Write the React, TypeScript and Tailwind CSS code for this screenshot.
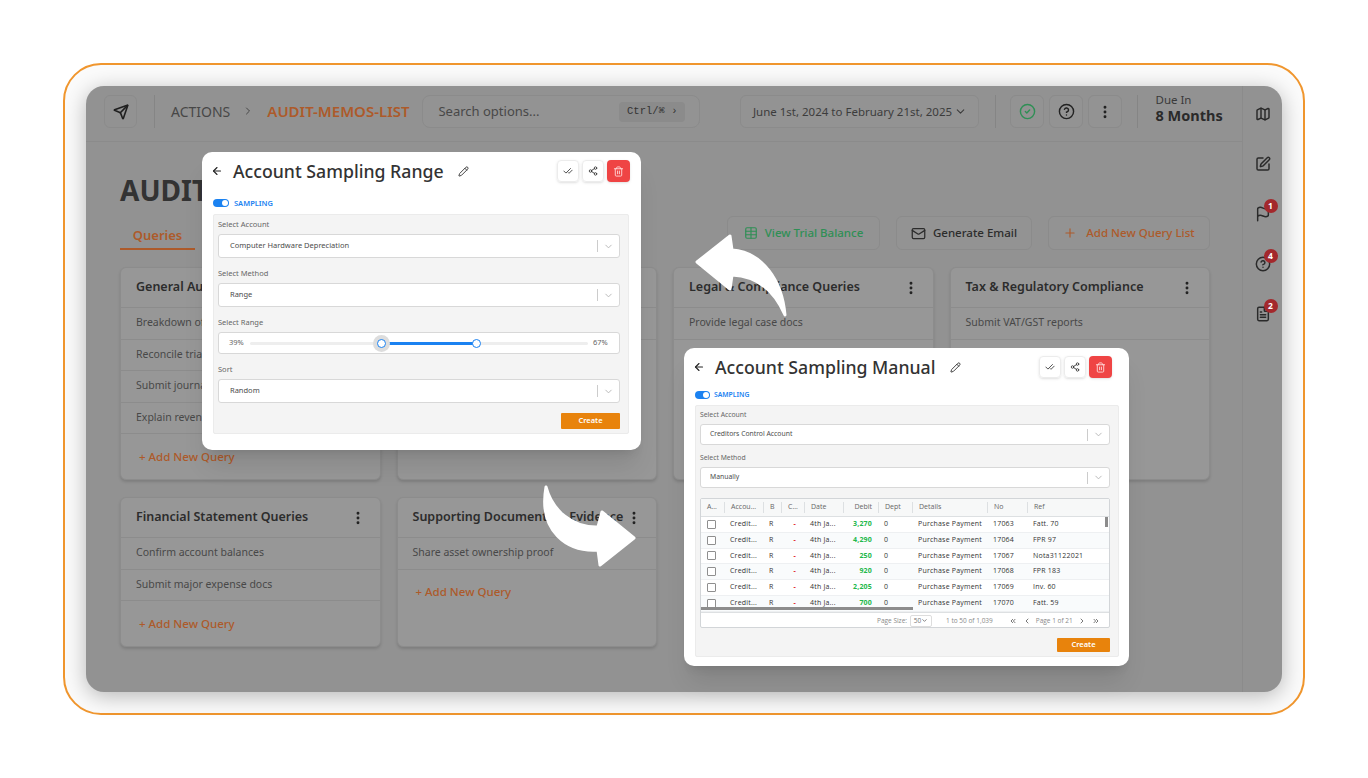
import {
  ArrowLeft,
  CheckCheck,
  ChevronDown,
  ChevronLeft,
  ChevronRight,
  ChevronsLeft,
  ChevronsRight,
  CircleCheck,
  CircleHelp,
  EllipsisVertical,
  FileText,
  Flag,
  Mail,
  Map as MapIcon,
  Pencil,
  Plus,
  Send,
  Share2,
  SquarePen,
  Table,
  Trash2,
} from 'lucide-react'

const font = { fontFamily: '"Noto Sans", "Open Sans", sans-serif' }

const queryCards = [
  {
    title: 'General Audit Queries',
    rows: ['Breakdown of expenses', 'Reconcile trial balance', 'Submit journal entries', 'Explain revenue changes'],
  },
  { title: '', rows: [''] },
  { title: 'Legal & Compliance Queries', rows: ['Provide legal case docs'] },
  { title: 'Tax & Regulatory Compliance', rows: ['Submit VAT/GST reports'] },
  { title: 'Financial Statement Queries', rows: ['Confirm account balances', 'Submit major expense docs'] },
  { title: 'Supporting Documents & Evidence', rows: ['Share asset ownership proof'] },
]

const ledgerRows = [
  { debit: '3,270', no: '17063', ref: 'Fatt. 70' },
  { debit: '4,290', no: '17064', ref: 'FPR 97' },
  { debit: '250', no: '17067', ref: 'Nota31122021' },
  { debit: '920', no: '17068', ref: 'FPR 183' },
  { debit: '2,205', no: '17069', ref: 'Inv. 60' },
  { debit: '700', no: '17070', ref: 'Fatt. 59' },
]

const gridCols = 'grid grid-cols-[23px_39px_18px_23px_39px_35px_34px_75px_40px_1fr]'

function HeaderButton({ children }: { children: React.ReactNode }) {
  return (
    <div className="w-[34px] h-[33px] flex items-center justify-center rounded-md border border-[#8b8b8b] bg-[#939393]">
      {children}
    </div>
  )
}

function SideIcon({ icon, badge }: { icon: React.ReactNode; badge?: string }) {
  return (
    <div className="relative w-[16px] h-[16px] text-[#2a2a2a]">
      {icon}
      {badge && (
        <span className="absolute left-[9px] top-[-7px] w-[14px] h-[14px] rounded-full bg-[#a3282c] text-white text-[8.5px] font-bold flex items-center justify-center">
          {badge}
        </span>
      )}
    </div>
  )
}

function QueryCard({ title, rows }: { title: string; rows: string[] }) {
  return (
    <div className="rounded-md border border-[#8c8c8c] bg-[#979797] shadow-[0_2px_3px_rgba(0,0,0,0.14)]">
      <div className="h-[40px] pl-[15px] pr-[14px] flex items-center justify-between border-b border-[#8c8c8c]">
        <span className="text-[12.5px] font-semibold text-[#2c2c2c] whitespace-nowrap">{title}</span>
        <EllipsisVertical size={16} strokeWidth={2.4} className="text-[#222222] shrink-0" />
      </div>
      {rows.map((row, i) => (
        <div key={i} className="h-[31.5px] pl-[15px] flex items-center border-b border-[#8c8c8c] text-[10.5px] text-[#484848]">
          {row}
        </div>
      ))}
      <div className="h-[45px] pl-[18px] flex items-center text-[11.5px] font-medium text-[#ad5a2a]">+ Add New Query</div>
    </div>
  )
}

function SelectBox({ value, className, small }: { value: string; className: string; small?: boolean }) {
  return (
    <div className={`${className} bg-white border border-[#d8d8d8] rounded-[3px] flex items-center ${small ? 'pl-[9px] text-[6.8px]' : 'pl-[11px] text-[7.5px]'} text-[#4c4c4c]`}>
      <span className="flex-1">{value}</span>
      <span className="w-px h-[12px] bg-[#cccccc]" />
      <ChevronDown size={11} className="mx-[5px] text-[#b5b5b5]" />
    </div>
  )
}

function FieldLabel({ children, small }: { children: React.ReactNode; small?: boolean }) {
  return <div className={`${small ? 'text-[6.8px]' : 'text-[7.5px]'} text-[#666666] leading-[10px]`}>{children}</div>
}

function PopupHeader({ title }: { title: string }) {
  return (
    <div className="flex items-center h-[22px]">
      <ArrowLeft size={12} strokeWidth={2.2} className="text-[#222222] ml-[-2px]" />
      <span className="ml-[10px] text-[17.7px] font-medium text-[#333333] whitespace-nowrap">{title}</span>
      <Pencil size={11} className="ml-[14px] text-[#333333]" />
      <div className="ml-auto flex gap-[3px]">
        <div className="w-[22px] h-[22px] rounded border border-[#ececec] flex items-center justify-center shadow-sm">
          <CheckCheck size={10} className="text-[#333333]" />
        </div>
        <div className="w-[22px] h-[22px] rounded border border-[#ececec] flex items-center justify-center shadow-sm">
          <Share2 size={10} className="text-[#333333]" />
        </div>
        <div className="w-[23px] h-[22px] rounded bg-[#ef4444] flex items-center justify-center shadow-sm">
          <Trash2 size={11} className="text-[#ffd9d9]" />
        </div>
      </div>
    </div>
  )
}

function SamplingToggle({ className, small }: { className: string; small?: boolean }) {
  return (
    <div className={`${className} flex items-center ${small ? 'gap-[4px]' : 'gap-[5px]'}`}>
      <span className={`${small ? 'w-[15px]' : 'w-[16px]'} h-[8px] rounded-full bg-[#1b82f1] flex items-center justify-end pr-[1px]`}>
        <span className="w-[6px] h-[6px] rounded-full bg-white" />
      </span>
      <span className={`${small ? 'text-[6.8px]' : 'text-[7.5px]'} font-semibold text-[#1b82f1] leading-[8px]`}>SAMPLING</span>
    </div>
  )
}

function CreateButton({ className }: { className: string }) {
  return (
    <div className={`${className} bg-[#e8830c] rounded-[1px] flex items-center justify-center text-white text-[7.5px] font-semibold`}>
      Create
    </div>
  )
}

function RangePopup() {
  return (
    <div className="absolute left-[202px] top-[152px] w-[439px] h-[298px] bg-white rounded-[10px] shadow-xl pl-[11px] pr-[11px] pt-[8px]">
      <PopupHeader title="Account Sampling Range" />
      <SamplingToggle className="mt-[17px]" />
      <div className="mt-[7px] w-[416px] h-[220px] bg-[#f4f4f4] border border-[#ebebeb] rounded-[2px] pl-[4px] pr-[8px] pt-[4px]">
        <FieldLabel>Select Account</FieldLabel>
        <SelectBox value="Computer Hardware Depreciation" className="mt-[5px] h-[24px]" />
        <div className="mt-[10px]"><FieldLabel>Select Method</FieldLabel></div>
        <SelectBox value="Range" className="mt-[5px] h-[24px]" />
        <div className="mt-[10px]"><FieldLabel>Select Range</FieldLabel></div>
        <div className="mt-[5px] h-[22px] bg-white border border-[#d8d8d8] rounded-[3px] flex items-center pl-[10px] pr-[10px] gap-[5px] text-[7.5px] text-[#666666]">
          <span className="w-[16px]">39%</span>
          <div className="relative flex-1 h-[3px] bg-[#eeeeee] rounded-full">
            <div className="absolute left-[39%] w-[28%] h-[3px] bg-[#1b82f1]" />
            <div className="absolute left-[39%] top-[-7px] ml-[-8.5px] w-[17px] h-[17px] rounded-full bg-[#dddddd]" />
            <div className="absolute left-[39%] top-[-3px] ml-[-4.5px] w-[9px] h-[9px] rounded-full bg-white border-[1.5px] border-[#1b82f1]" />
            <div className="absolute left-[67%] top-[-3px] ml-[-4.5px] w-[9px] h-[9px] rounded-full bg-white border-[1.5px] border-[#1b82f1]" />
          </div>
          <span className="w-[16px]">67%</span>
        </div>
        <div className="mt-[10px]"><FieldLabel>Sort</FieldLabel></div>
        <SelectBox value="Random" className="mt-[5px] h-[24px]" />
        <div className="mt-[10px] flex justify-end">
          <CreateButton className="w-[59px] h-[16px]" />
        </div>
      </div>
    </div>
  )
}

function LedgerGrid() {
  const head = ['A...', 'Accou...', 'B', 'C...', 'Date', 'Debit', 'Dept', 'Details', 'No', 'Ref']
  return (
    <div className="relative mt-[10px] h-[130px] bg-white border border-[#d2d5d8] rounded-[2px] overflow-hidden" style={{ fontFamily: '"Open Sans", sans-serif' }}>
      <div className={`${gridCols} h-[18px] bg-[#f7f8f8] border-b border-[#dde0e2] text-[7px] text-[#666666] items-center`}>
        {head.map((h, i) => (
          <span key={h} className={`whitespace-nowrap ${i === 5 ? 'text-right pr-[6px] border-l border-[#dde0e2]' : 'pl-[6px] border-l border-[#dde0e2]'} ${i === 0 ? 'border-l-0' : ''}`}>
            {h}
          </span>
        ))}
      </div>
      <div className="h-[95px] overflow-hidden">
        {ledgerRows.map((row, i) => (
          <div key={row.no} className={`${gridCols} h-[15.75px] items-center border-b border-[#eef0f2] text-[7px] tracking-[0.2px] text-[#333333] ${i % 2 ? 'bg-[#f9fbfc]' : 'bg-white'}`}>
            <span className="pl-[6px]">
              <span className="block w-[9px] h-[9px] rounded-[1px] border border-[#8f8f8f] bg-white" />
            </span>
            <span className="pl-[6px]">Credit...</span>
            <span className="pl-[6px]">R</span>
            <span className="text-right pr-[8px] text-[#e02424] font-bold">-</span>
            <span className="pl-[6px] whitespace-nowrap">4th Ja...</span>
            <span className="text-right pr-[6px] font-bold text-[#22b84a]">{row.debit}</span>
            <span className="pl-[6px]">0</span>
            <span className="pl-[6px] whitespace-nowrap">Purchase Payment</span>
            <span className="pl-[6px]">{row.no}</span>
            <span className="pl-[6px] whitespace-nowrap">{row.ref}</span>
          </div>
        ))}
      </div>
      <div className="absolute left-0 top-[108px] w-[212px] h-[3px] bg-[#8c8c8c]" />
      <div className="absolute right-[1px] top-[18px] w-[3px] h-[10px] bg-[#8c8c8c]" />
      <div className="h-[16px] border-t border-[#dde0e2] flex items-center text-[6.5px] text-[#8a8a8a] pl-[176px]">
        <span className="whitespace-nowrap">Page Size:</span>
        <span className="ml-[3px] w-[22px] h-[12px] border border-[#dddddd] rounded-[2px] flex items-center justify-center text-[#777777]">
          50<ChevronDown size={7} className="text-[#333333]" />
        </span>
        <span className="ml-[14px] whitespace-nowrap">1 to 50 of 1,039</span>
        <ChevronsLeft size={8} className="ml-[16px] text-[#333333]" />
        <ChevronLeft size={8} className="ml-[6px] text-[#333333]" />
        <span className="ml-[5px] whitespace-nowrap">Page 1 of 21</span>
        <ChevronRight size={8} className="ml-[5px] text-[#333333]" />
        <ChevronsRight size={8} className="ml-[6px] text-[#333333]" />
      </div>
    </div>
  )
}

function ManualPopup() {
  return (
    <div className="absolute left-[684px] top-[348px] w-[445px] h-[318px] bg-white rounded-[10px] shadow-xl pl-[11px] pr-[10px] pt-[8px]">
      <div className="pr-[7px]">
        <PopupHeader title="Account Sampling Manual" />
      </div>
      <SamplingToggle className="mt-[13px]" small />
      <div className="mt-[6px] w-[424px] h-[252px] bg-[#f4f4f4] border border-[#ebebeb] rounded-[2px] pl-[4px] pr-[8px] pt-[4px]">
        <FieldLabel small>Select Account</FieldLabel>
        <SelectBox value="Creditors Control Account" className="mt-[4px] h-[21px]" small />
        <div className="mt-[8px]"><FieldLabel small>Select Method</FieldLabel></div>
        <SelectBox value="Manually" className="mt-[4px] h-[21px]" small />
        <LedgerGrid />
        <div className="mt-[10px] flex justify-end">
          <CreateButton className="w-[53px] h-[14px]" />
        </div>
      </div>
    </div>
  )
}

export default function App() {
  return (
    <div className="relative w-[1368px] h-[778px] bg-white overflow-hidden pl-[63px] pt-[63px]" style={font}>
      {/* Orange frame */}
      <div className="w-[1242px] h-[652px] rounded-[38px] border-2 border-[#f0962e] bg-[#fbfbfb] pl-[21px] pt-[21px]">
        {/* Dimmed app window */}
        <div className="w-[1196px] h-[606px] rounded-[18px] bg-[#929292] overflow-hidden flex shadow-[0_4px_22px_rgba(0,0,0,0.28)]">
          <div className="w-[1156px] shrink-0">
            {/* Top bar */}
            <div className="h-[56px] border-b border-[#8b8b8b] flex items-start pt-[9px] pl-[18px]">
              <div className="w-[33px] h-[33px] rounded-md border border-[#8b8b8b] flex items-center justify-center">
                <Send size={16} strokeWidth={2.4} className="text-[#1f1f1f]" />
              </div>
              <div className="ml-[17px] w-px h-[33px] bg-[#858585]" />
              <span className="ml-[16px] h-[32px] flex items-center text-[14px] text-[#474747]">ACTIONS</span>
              <ChevronRight size={12} className="ml-[12px] mt-[10px] text-[#474747]" />
              <span className="ml-[13px] h-[32px] flex items-center text-[15px] font-semibold text-[#ad5a2a] whitespace-nowrap">AUDIT-MEMOS-LIST</span>
              <div className="ml-[13px] w-[278px] h-[33px] rounded-lg border border-[#8b8b8b] bg-[#939393] flex items-center pl-[15px] text-[13px] text-[#484848]">
                <span className="flex-1">Search options...</span>
                <span className="mr-[14px] px-[8px] h-[20px] rounded bg-[#8b8b8b] flex items-center text-[10.5px] text-[#333333]" style={{ fontFamily: '"Liberation Mono", monospace' }}>
                  Ctrl/⌘ ›
                </span>
              </div>
              <div className="ml-[40px] w-[239px] h-[33px] rounded-md border border-[#8b8b8b] bg-[#939393] flex items-center justify-center gap-[2px] text-[11.5px] text-[#3c3c3c] whitespace-nowrap">
                June 1st, 2024 to February 21st, 2025
                <ChevronDown size={13} />
              </div>
              <div className="ml-[16px] w-px h-[33px] bg-[#858585]" />
              <div className="ml-[14px] flex gap-[5px]">
                <HeaderButton>
                  <CircleCheck size={17} className="text-[#2f8f55]" />
                </HeaderButton>
                <HeaderButton>
                  <CircleHelp size={17} className="text-[#222222]" />
                </HeaderButton>
                <HeaderButton>
                  <EllipsisVertical size={16} strokeWidth={2.4} className="text-[#222222]" />
                </HeaderButton>
              </div>
              <div className="ml-[15px] w-px h-[33px] bg-[#858585]" />
              <div className="ml-[17px] mt-[-1px] leading-none">
                <div className="text-[11.5px] text-[#3a3a3a]">Due In</div>
                <div className="mt-[2px] text-[14.5px] font-bold text-[#2a2a2a] whitespace-nowrap">8 Months</div>
              </div>
            </div>

            {/* Page content */}
            <div className="pl-[34px] pr-[32px]">
              <h1 className="mt-[31px] h-[34px] flex items-center text-[28px] font-bold text-[#333333] whitespace-nowrap">AUDIT MEMOS</h1>
              <div className="mt-[9px] h-[34px] flex items-start justify-between">
                <div className="w-[75px] h-[34px] border-b-2 border-[#ad5a2a] flex items-end justify-center pb-[4px] text-[13px] font-semibold text-[#ad5a2a] leading-[18px]">
                  Queries
                </div>
                <div className="flex gap-4">
                  <div className="w-[153px] h-[34px] rounded-md border border-[#8b8b8b] bg-[#939393] flex items-center justify-center gap-[7px] text-[11.5px] font-medium text-[#2f8f55]">
                    <Table size={14} />
                    View Trial Balance
                  </div>
                  <div className="w-[136px] h-[34px] rounded-md border border-[#8b8b8b] bg-[#939393] flex items-center justify-center gap-[7px] text-[11.5px] font-medium text-[#2c2c2c]">
                    <Mail size={15} />
                    Generate Email
                  </div>
                  <div className="w-[162px] h-[34px] rounded-md border border-[#8b8b8b] bg-[#939393] flex items-center justify-center gap-[9px] text-[11.5px] font-medium text-[#ad5a2a]">
                    <Plus size={14} />
                    Add New Query List
                  </div>
                </div>
              </div>
              <div className="mt-[17px] grid grid-cols-4 gap-x-4 gap-y-[17px] items-stretch">
                {queryCards.map((card, i) => (
                  <QueryCard key={i} title={card.title} rows={card.rows} />
                ))}
              </div>
            </div>
          </div>

          {/* Right rail */}
          <div className="flex-1 border-l border-[#8b8b8b] pt-[20px] flex flex-col items-center gap-[34px]">
            <SideIcon icon={<MapIcon size={16} strokeWidth={2.2} />} />
            <SideIcon icon={<SquarePen size={16} strokeWidth={2.2} />} />
            <SideIcon icon={<Flag size={16} strokeWidth={2.2} />} badge="1" />
            <SideIcon icon={<CircleHelp size={16} strokeWidth={2.2} />} badge="4" />
            <SideIcon icon={<FileText size={16} strokeWidth={2.2} />} badge="2" />
          </div>
        </div>
      </div>

      <RangePopup />
      <ManualPopup />

      {/* Arrows between the two popups */}
      <svg className="absolute left-[690px] top-[230px]" width="100" height="90" viewBox="0 0 100 90">
        <path d="M7 32 L40 6 L42 20 C72 22 92 50 95 85 C85 62 68 46 42 45 L40 59 Z" fill="#ffffff" stroke="#ffffff" strokeWidth="3" strokeLinejoin="round" />
      </svg>
      <svg className="absolute left-[540px] top-[482px]" width="100" height="90" viewBox="0 0 100 90">
        <path d="M6 5 C12 28 32 46 58 45 L62 30 L94 56 L60 83 L58 68 C28 70 -2 50 6 5 Z" fill="#ffffff" stroke="#ffffff" strokeWidth="3" strokeLinejoin="round" />
      </svg>
    </div>
  )
}
